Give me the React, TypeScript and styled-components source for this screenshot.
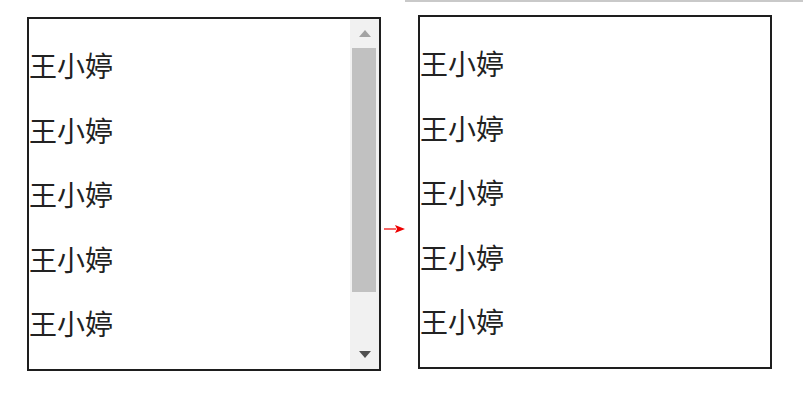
import React from "react";
import styled, { createGlobalStyle } from "styled-components";

const GlobalStyle = createGlobalStyle`
    html, body {
        margin: 0;
        padding: 0;
        background: #ffffff;
    }
    body {
        font-family: "Noto Sans CJK SC", "Noto Sans", sans-serif;
        color: #222222;
    }
`;

const Page = styled.div`
    display: flex;
    align-items: flex-start;
    width: 803px;
    height: 404px;
    overflow: hidden;
`;

const LeftPane = styled.div`
    padding: 17px 0 0 27px;
`;

const Connector = styled.div`
    width: 24px;
    padding-top: 224px;
    display: flex;
    justify-content: flex-end;

    svg {
        display: block;
    }
`;

const RightPane = styled.div`
    flex: 1;
    border-top: 2px solid #c9c9c9;
    padding: 13px 0 0 13px;
`;

const Box = styled.div`
    box-sizing: border-box;
    width: 354px;
    height: 354px;
    border: 2px solid #1e1e1e;
    background: #ffffff;
    display: flex;
`;

const List = styled.ul`
    flex: 1;
    min-width: 0;
    margin: 0;
    padding: 14px 0 0 0;
    list-style: none;
    overflow: hidden;
`;

const Item = styled.li`
    height: 64.5px;
    line-height: 64.5px;
    font-size: 28px;
    white-space: nowrap;
`;

const ScrollTrack = styled.div`
    width: 29px;
    flex: none;
    background: #f1f1f1;
    display: flex;
    flex-direction: column;
`;

const ScrollButton = styled.div`
    height: 29px;
    flex: none;
    display: flex;
    align-items: center;
    justify-content: center;
`;

const Thumb = styled.div`
    height: 244px;
    margin: 0 3px 0 2px;
    background: #c1c1c1;
`;

const Spacer = styled.div`
    flex: 1;
`;

const Triangle = ({ up, color }: { up?: boolean; color: string }) => (
	<svg width="12" height="7" viewBox="0 0 12 7">
		<polygon points={up ? "0,7 12,7 6,0" : "0,0 12,0 6,7"} fill={color} />
	</svg>
);

const Arrow = () => (
	<svg width="21" height="10" viewBox="0 0 21 10">
		<line x1="0" y1="5" x2="12" y2="5" stroke="#ee0000" strokeWidth="1.2" />
		<polygon points="11,1 21,5 11,9 13,5" fill="#ee0000" />
	</svg>
);

const names = ["王小婷", "王小婷", "王小婷", "王小婷", "王小婷"];

const App = () => {
	return (
		<>
			<GlobalStyle />
			<Page>
				<LeftPane>
					<Box>
						<List>
							{names.map((n, i) => (
								<Item key={i}>{n}</Item>
							))}
						</List>
						<ScrollTrack>
							<ScrollButton>
								<Triangle up color="#a3a3a3" />
							</ScrollButton>
							<Thumb />
							<Spacer />
							<ScrollButton>
								<Triangle color="#505050" />
							</ScrollButton>
						</ScrollTrack>
					</Box>
				</LeftPane>
				<Connector>
					<Arrow />
				</Connector>
				<RightPane>
					<Box>
						<List>
							{names.map((n, i) => (
								<Item key={i}>{n}</Item>
							))}
						</List>
					</Box>
				</RightPane>
			</Page>
		</>
	);
};

export default App;
